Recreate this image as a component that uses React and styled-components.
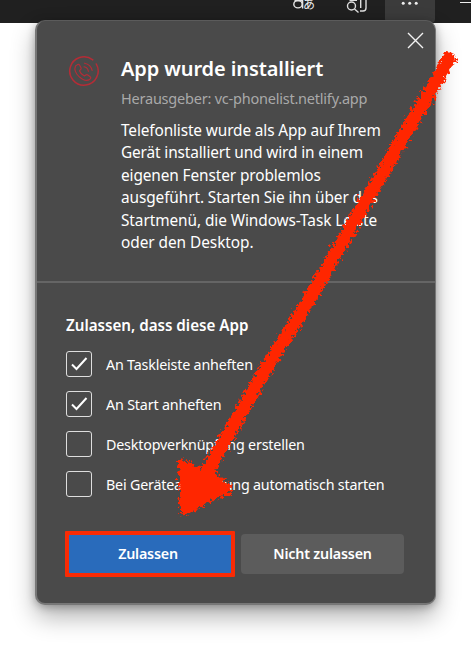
import React from "react";
import styled, { createGlobalStyle } from "styled-components";

const GlobalStyle = createGlobalStyle`
  * { box-sizing: border-box; }
  html, body { margin: 0; height: 100%; overflow: hidden; background: #fff; }
  body { font-family: "Noto Sans", "Open Sans", sans-serif; color: #fff; }
`;

const Screen = styled.main`
  position: relative;
  width: 471px;
  height: 655px;
  overflow: hidden;
  background: #fff;
`;

const Toolbar = styled.header`
  display: flex;
  justify-content: flex-end;
  height: 23px;
  background: #202020;
`;

const ToolButton = styled.div`
  width: ${(p) => p.$width}px;
  height: 23px;
  background: ${(p) => (p.$active ? "#3b3b3b" : "transparent")};
  border-radius: 0 0 4px 4px;
  svg { display: block; }
`;

const Dialog = styled.section`
  position: absolute;
  left: 35px;
  top: 20px;
  width: 401px;
  height: 585px;
  display: flex;
  flex-direction: column;
  background: #4a4a4a;
  border: solid #777;
  border-width: 1px 1px 2px 2px;
  border-top-color: #5b5b5b;
  border-radius: 10px;
  box-shadow: 0 12px 24px rgba(0, 0, 0, 0.3), 0 2px 8px rgba(0, 0, 0, 0.28);
`;

const Intro = styled.div`
  display: grid;
  grid-template-columns: 84px 1fr;
  height: 260px;
  padding-top: 33px;
`;

const AppIcon = styled.svg`
  margin: 1px 0 0 31px;
  width: 32px;
  height: 32px;
`;

const Title = styled.h1`
  margin: 0;
  font-size: 20px;
  line-height: 30px;
  font-weight: 600;
  white-space: nowrap;
  letter-spacing: ${(p) => p.$track}px;
`;

const Publisher = styled.p`
  margin: 2px 0 9.5px;
  font-size: 14.5px;
  line-height: 24px;
  color: #a9a9a9;
  white-space: nowrap;
  letter-spacing: ${(p) => p.$track}px;
`;

const Line = styled.span`
  display: block;
  font-size: 15.4px;
  line-height: 22.6px;
  white-space: nowrap;
  letter-spacing: ${(p) => p.$track}px;
`;

const CloseButton = styled.button`
  position: absolute;
  right: 11px;
  top: 11px;
  width: 17px;
  height: 17px;
  padding: 0;
  border: 0;
  background: none;
  svg { display: block; }
`;

const Permissions = styled.div`
  flex: 1;
  border-top: 2px solid #656565;
  padding: 30px 30px 0 29px;
`;

const Heading = styled.h2`
  margin: 0 0 14px;
  font-size: 15.2px;
  line-height: 24px;
  font-weight: 600;
  white-space: nowrap;
  letter-spacing: ${(p) => p.$track}px;
`;

const Option = styled.label`
  display: flex;
  align-items: center;
  gap: 14.5px;
  height: 26px;
  margin-bottom: 14px;
  font-size: 14.3px;
  white-space: nowrap;
  letter-spacing: ${(p) => p.$track}px;
`;

const Box = styled.span`
  flex: none;
  width: 25.5px;
  height: 26px;
  border: 1.5px solid #dedede;
  border-radius: 3px;
  svg { display: block; }
`;

const Actions = styled.div`
  display: flex;
  gap: 5px;
  margin: 34px 0 0 -1px;
`;

const Button = styled.button`
  width: ${(p) => (p.$primary ? 170 : 163)}px;
  height: ${(p) => (p.$primary ? 46 : 40)}px;
  margin-top: ${(p) => (p.$primary ? 0 : 3)}px;
  margin-right: ${(p) => (p.$primary ? 1 : 0)}px;
  padding: ${(p) => (p.$primary ? "0 4px 2px 0" : "0 0 1px")};
  border: ${(p) => (p.$primary ? "4px solid #f92b05" : "0")};
  border-radius: ${(p) => (p.$primary ? 1 : 4)}px;
  background: ${(p) => (p.$primary ? "#296bbb" : "#5c5c5c")};
  color: #fff;
  font: 600 14.3px "Noto Sans", "Open Sans", sans-serif;
  white-space: nowrap;
  letter-spacing: ${(p) => p.$track}px;
`;

const Annotation = styled.svg`
  position: absolute;
  inset: 0;
  pointer-events: none;
`;

const Kana = styled.text`
  font: 400 12px "Noto Sans CJK JP", sans-serif;
  fill: #f0f0f0;
  stroke: none;
`;

const copy = [
  ["Telefonliste wurde als App auf Ihrem", -0.13],
  ["Gerät installiert und wird in einem", -0.13],
  ["eigenen Fenster problemlos", -0.11],
  ["ausgeführt. Starten Sie ihn über das", -0.1],
  ["Startmenü, die Windows-Task Leiste", -0.08],
  ["oder den Desktop.", -0.05],
];

const options = [
  ["An Taskleiste anheften", true, -0.19],
  ["An Start anheften", true, -0.17],
  ["Desktopverknüpfung erstellen", false, -0.19],
  ["Bei Geräteanmeldung automatisch starten", false, -0.2],
];

function TranslateIcon() {
  return (
    <svg width="54" height="23" fill="none" stroke="#e4e4e4" strokeWidth="1.4">
      <ellipse cx="17" cy="4.200" rx="4.200" ry="3.700" />
      <path d="M13.500.5H21M21.600-1v9.500" />
      <Kana x="22" y="8.500">あ</Kana>
    </svg>
  );
}

function SearchPageIcon() {
  return (
    <svg width="50" height="23" fill="none" stroke="#dedede" strokeWidth="1.4">
      <circle cx="16.500" cy="6" r="4" />
      <path d="m19.500 9 4 3.500M14.500.3H22M25.700-1v9M31-2v10q0 3-3 3h-3" />
    </svg>
  );
}

function PhoneIcon() {
  return (
    <AppIcon viewBox="0 0 32 32" fill="none" stroke="#b52c36" strokeWidth="1.15" strokeLinecap="round" strokeLinejoin="round">
      <path d="M24.800 4.900A14.200 14.200 0 1 0 28.300 9" strokeWidth="1.500" />
      <path d="M7.500 11 9.500 9.600q1.300-.8 2 .5l1.500 2.700q.5 1.200-.5 1.900l-1 1q1.200 3.600 4.900 5.300l1.400-1q1-.7 2 0l2.400 1.700q1 .9.300 1.900l-1.500 1.300C15.500 27 4.500 18.500 7.500 11Z" />
      <path d="M16 11.800q3.600.7 4.400 4.500M16.500 8.200q6.300 1 7.600 7.300" />
    </AppIcon>
  );
}

export default function App() {
  return (
    <Screen>
      <GlobalStyle />
      <Toolbar>
        <ToolButton $width={54}><TranslateIcon /></ToolButton>
        <ToolButton $width={50}><SearchPageIcon /></ToolButton>
        <ToolButton $width={50} $active>
          <svg width="50" height="23" fill="#eee">
            <circle cx="18.200" cy="3.200" r="1.500" /><circle cx="24.700" cy="3.200" r="1.500" /><circle cx="31.200" cy="3.200" r="1.500" />
          </svg>
        </ToolButton>
        <ToolButton $width={36}>
          <svg width="36" height="23"><path d="M25 2.500h12" stroke="#eee" strokeWidth="1" /></svg>
        </ToolButton>
      </Toolbar>
      <Dialog>
        <Intro>
          <PhoneIcon />
          <div>
            <Title $track={-0.1}>App wurde installiert</Title>
            <Publisher $track={-0.22}>Herausgeber: vc-phonelist.netlify.app</Publisher>
            {copy.map(([text, track]) => <Line key={text} $track={track}>{text}</Line>)}
          </div>
        </Intro>
        <CloseButton aria-label="Schließen">
          <svg width="17" height="17" stroke="#f2f2f2" strokeWidth="1.400"><path d="m1 1 15 15M16 1 1 16" /></svg>
        </CloseButton>
        <Permissions>
          <Heading $track={-0.02}>Zulassen, dass diese App</Heading>
          {options.map(([text, checked, track]) => (
            <Option key={text} $track={track}>
              <Box>
                {checked && <svg width="23" height="23" fill="none" stroke="#fff" strokeWidth="2"><path d="m5 12.500 4.500 4.500 10-11" /></svg>}
              </Box>
              {text}
            </Option>
          ))}
          <Actions>
            <Button $primary $track={-0.2}>Zulassen</Button>
            <Button $track={-0.2}>Nicht zulassen</Button>
          </Actions>
        </Permissions>
      </Dialog>
      <Annotation width="471" height="655" viewBox="0 0 471 655">
        <defs>
          <filter id="crayon" filterUnits="userSpaceOnUse" x="0" y="0" width="471" height="655">
            <feTurbulence type="fractalNoise" baseFrequency="0.32" numOctaves="3" seed="4" result="grain" />
            <feDisplacementMap in="SourceGraphic" in2="grain" scale="11" xChannelSelector="R" yChannelSelector="G" />
          </filter>
        </defs>
        <g filter="url(#crayon)" fill="#ff2600" stroke="#ff2600">
          <path d="M452 54 378 180 304 308 264 372 207 472" strokeWidth="13.500" fill="none" />
          <path d="m179 460 21 8 12 2 19 18v4l-20 8-26 15-4-3-1-36Z" strokeWidth="2" />
        </g>
      </Annotation>
    </Screen>
  );
}
